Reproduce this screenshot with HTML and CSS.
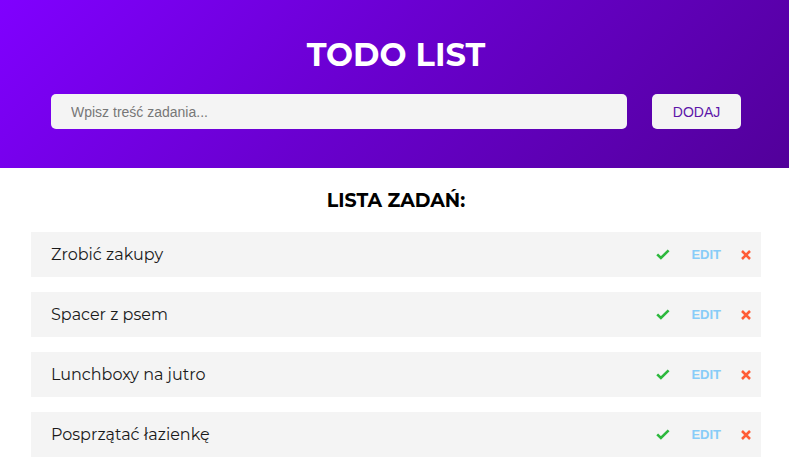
FILE: index.html
```html
<!DOCTYPE html>
<html lang="pl">
<head>
<meta charset="utf-8">
<title>Todo List</title>
<link rel="stylesheet" href="styles.css">
</head>
<body>
<header class="header">
  <h1 class="title">TODO LIST</h1>
  <div class="add-row">
    <input class="add-input" type="text" placeholder="Wpisz treść zadania...">
    <button class="add-btn">DODAJ</button>
  </div>
</header>
<main class="list-section">
  <h2 class="list-title">LISTA ZADAŃ:</h2>
  <ul class="tasks">
    <li class="task"><span class="task-name">Zrobić zakupy</span><span class="tools"><button class="tool done"><svg width="14" height="11" viewBox="0 0 14 11"><path d="M1.2 5.4 L4.9 9 L12.6 1.4" fill="none" stroke="#2db83d" stroke-width="2.6"/></svg></button><button class="tool edit">EDIT</button><button class="tool del"><svg width="10" height="10" viewBox="0 0 10 10"><path d="M1 1 L9 9 M9 1 L1 9" stroke="#ff5c36" stroke-width="2.5"/></svg></button></span></li>
    <li class="task"><span class="task-name">Spacer z psem</span><span class="tools"><button class="tool done"><svg width="14" height="11" viewBox="0 0 14 11"><path d="M1.2 5.4 L4.9 9 L12.6 1.4" fill="none" stroke="#2db83d" stroke-width="2.6"/></svg></button><button class="tool edit">EDIT</button><button class="tool del"><svg width="10" height="10" viewBox="0 0 10 10"><path d="M1 1 L9 9 M9 1 L1 9" stroke="#ff5c36" stroke-width="2.5"/></svg></button></span></li>
    <li class="task"><span class="task-name">Lunchboxy na jutro</span><span class="tools"><button class="tool done"><svg width="14" height="11" viewBox="0 0 14 11"><path d="M1.2 5.4 L4.9 9 L12.6 1.4" fill="none" stroke="#2db83d" stroke-width="2.6"/></svg></button><button class="tool edit">EDIT</button><button class="tool del"><svg width="10" height="10" viewBox="0 0 10 10"><path d="M1 1 L9 9 M9 1 L1 9" stroke="#ff5c36" stroke-width="2.5"/></svg></button></span></li>
    <li class="task"><span class="task-name">Posprzątać łazienkę</span><span class="tools"><button class="tool done"><svg width="14" height="11" viewBox="0 0 14 11"><path d="M1.2 5.4 L4.9 9 L12.6 1.4" fill="none" stroke="#2db83d" stroke-width="2.6"/></svg></button><button class="tool edit">EDIT</button><button class="tool del"><svg width="10" height="10" viewBox="0 0 10 10"><path d="M1 1 L9 9 M9 1 L1 9" stroke="#ff5c36" stroke-width="2.5"/></svg></button></span></li>
  </ul>
</main>
</body>
</html>
```

FILE: styles.css
```css
* { box-sizing: border-box; }
body {
  margin: 0;
  font-family: "Montserrat", "Lato", "Open Sans", sans-serif;
  background: #fff;
  color: #111;
}
.header {
  height: 168px;
  background: linear-gradient(135deg, #8000ff 0%, #6a00d0 45%, #52009a 100%);
  padding: 33px 48px 0 51px;
}
.title {
  margin: 0;
  height: 44px;
  text-align: center;
  color: #fff;
  font-size: 32px;
  font-weight: 700;
  line-height: 44px;
}
.add-row {
  display: flex;
  gap: 25px;
  margin-top: 17px;
}
.add-input {
  flex: 1;
  height: 35px;
  border: none;
  border-radius: 5px;
  background: #f4f4f4;
  padding: 0 20px;
  font-family: "Liberation Sans", Arial, sans-serif;
  font-size: 14px;
  color: #333;
  outline: none;
}
.add-input::placeholder { color: #777; }
.add-btn {
  width: 89px;
  height: 35px;
  border: none;
  border-radius: 5px;
  background: #f4f4f4;
  color: #5c14a8;
  font-family: "Liberation Sans", Arial, sans-serif;
  font-size: 14px;
  padding: 0;
}
.list-section {
  padding: 21px 28px 0 31px;
}
.list-title {
  margin: 0 0 19px;
  text-align: center;
  font-size: 19px;
  font-weight: 700;
  line-height: 24px;
  color: #000;
}
.tasks {
  list-style: none;
  margin: 0;
  padding: 0;
  display: flex;
  flex-direction: column;
  gap: 15px;
}
.task {
  height: 45px;
  background: #f4f4f4;
  display: flex;
  align-items: center;
  justify-content: space-between;
  padding: 0 10px 0 20px;
}
.task-name {
  font-size: 16px;
  color: #1a1a1a;
}
.tools {
  display: flex;
  align-items: center;
}
.tool {
  border: none;
  background: none;
  padding: 0;
  display: flex;
  align-items: center;
  justify-content: center;
}
.done { width: 14px; margin-right: 21px; }
.edit {
  font-family: "Liberation Sans", Arial, sans-serif;
  font-weight: bold;
  font-size: 13px;
  color: #88ccf8;
  margin-right: 20px;
}
.del { width: 10px; }
```
